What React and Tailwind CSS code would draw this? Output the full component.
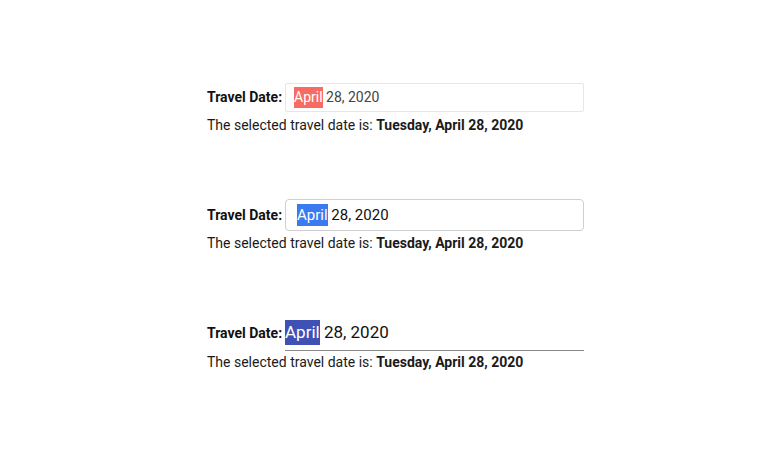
const DateRow = ({ variant }) => {
  const boxClass = {
    plain: 'h-[29px] w-[299px] border border-[#e6e6e6] rounded-[2px] pl-[8px] text-[14px] text-[#444]',
    bordered: 'h-[32px] w-[299px] border border-[#cfcfcf] rounded-[4px] pl-[11px] text-[15px] text-[#111]',
    material: 'h-[30px] w-[299px] border-b border-[#8a8a8a] pb-[6px] text-[17px] text-[#111]',
  }[variant];
  const markClass = {
    plain: 'bg-[#f76b63] text-white',
    bordered: 'bg-[#3a7cf0] text-white',
    material: 'bg-[#3f51b5] text-white',
  }[variant];
  const rowClass = {
    plain: '',
    bordered: 'mt-[63px]',
    material: 'mt-[67px]',
  }[variant];
  const labelClass = variant === 'material' ? 'mb-[6px]' : '';
  const descClass = {
    plain: 'mt-[3px]',
    bordered: 'mt-[2px]',
    material: 'mt-[1px]',
  }[variant];

  return (
    <div className={`flex flex-col ${rowClass}`}>
      <div className="flex items-center">
        <span className={`w-[78px] text-[14px] font-bold text-[#111] ${labelClass}`}>Travel Date:</span>
        <div className={`flex items-center ${boxClass}`}>
          <span className={markClass}>April</span>
          <span>&nbsp;28, 2020</span>
        </div>
      </div>
      <p className={`text-[14px] text-[#1a1a1a] ${descClass}`}>
        The selected travel date is: <span className="font-bold">Tuesday, April 28, 2020</span>
      </p>
    </div>
  );
};

export default function App() {
  return (
    <div
      className="w-[770px] h-[466px] bg-white pl-[207px] pt-[83px] flex flex-col"
      style={{ fontFamily: 'Roboto, "Liberation Sans", sans-serif' }}
    >
      <DateRow variant="plain" />
      <DateRow variant="bordered" />
      <DateRow variant="material" />
    </div>
  );
}
